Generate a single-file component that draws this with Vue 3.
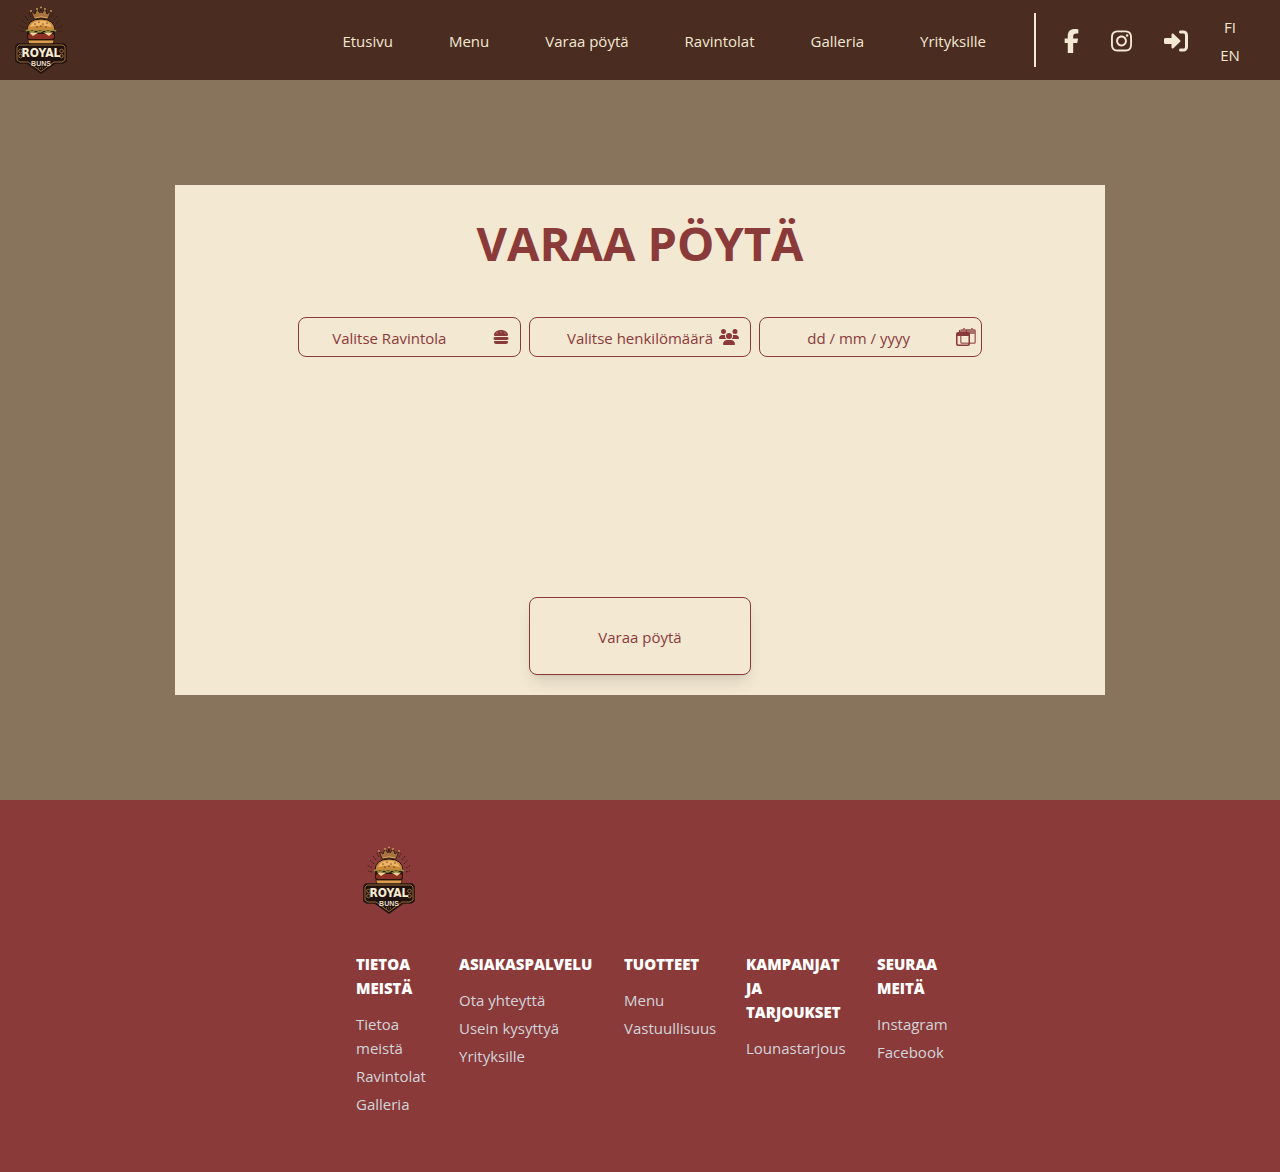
<script setup>
import { h, ref } from 'vue'

const restaurant = ref('')
const guests = ref('')
const date = ref('')

const navLinks = ['Etusivu', 'Menu', 'Varaa pöytä', 'Ravintolat', 'Galleria', 'Yrityksille']

const footerColumns = [
  { title: 'Tietoa meistä', links: ['Tietoa meistä', 'Ravintolat', 'Galleria'] },
  { title: 'Asiakaspalvelu', links: ['Ota yhteyttä', 'Usein kysyttyä', 'Yrityksille'] },
  { title: 'Tuotteet', links: ['Menu', 'Vastuullisuus'] },
  { title: 'Kampanjat ja tarjoukset', links: ['Lounastarjous'] },
  { title: 'Seuraa meitä', links: ['Instagram', 'Facebook'] }
]

const rays = [
  [24, 32, 20, 31], [24, 28, 19, 25], [26, 24, 22, 20], [28, 20, 25, 16], [31, 17, 29, 13],
  [58, 32, 62, 31], [58, 28, 63, 25], [56, 24, 60, 20], [54, 20, 57, 16], [51, 17, 53, 13]
]
const seeds = [[35, 24], [39, 22], [43, 24], [47, 23], [41, 26], [37, 27], [46, 27]]

// Burger logo, shared by the header and the footer
const BrandLogo = () =>
  h('svg', { viewBox: '0 0 80 80', width: 80, height: 80, role: 'img', 'aria-label': 'Royal Buns' }, [
    ...rays.map(([x1, y1, x2, y2]) =>
      h('line', { x1, y1, x2, y2, stroke: '#2b1a12', 'stroke-width': 0.8, 'stroke-dasharray': '2 1' })),
    h('path', { d: 'M34 19 L31 11 L35 14 L37 9 L40 13 L41 8 L42 13 L45 9 L47 14 L51 11 L48 19 Q41 16.500 34 19Z', fill: '#a87340', stroke: '#2b1a12', 'stroke-width': 0.9 }),
    h('path', { d: 'M35 18 Q41 15.500 47 18', fill: 'none', stroke: '#d9a766', 'stroke-width': 1 }),
    ...[[31, 11], [37, 9], [41, 7.5], [45, 9], [51, 11]].map(([cx, cy]) =>
      h('circle', { cx, cy, r: 1, fill: '#c99459' })),
    h('path', { d: 'M27 31 Q27 19 41 19 Q55 19 55 31Z', fill: '#c98a3c', stroke: '#20120d', 'stroke-width': 1 }),
    h('path', { d: 'M30 27 Q32 20.500 41 20.500 Q50 20.500 52 27 Q41 24 30 27Z', fill: '#edb566' }),
    ...seeds.map(([cx, cy]) => h('ellipse', { cx, cy, rx: 0.9, ry: 0.6, fill: '#552b16' })),
    h('rect', { x: 27, y: 31, width: 28, height: 9, rx: 2, fill: '#27150f' }),
    h('path', { d: 'M26 31 Q28 29 30 31 T34 31 T38 31 T42 31 T46 31 T50 31 T56 31', fill: 'none', stroke: '#9b9335', 'stroke-width': 1.4 }),
    h('rect', { x: 28, y: 34, width: 26, height: 5, rx: 2, fill: '#8c3023' }),
    h('path', { d: 'M29 32.500 H39 L36 34 L33 36Z M43 32.500 H53 L49 36 L46 34Z', fill: '#f4d693' }),
    h('path', { d: 'M28 40 H54 Q54 44.500 50 44.500 H32 Q28 44.500 28 40Z', fill: '#dc9c4d', stroke: '#27150f', 'stroke-width': 0.8 }),
    h('path', { d: 'M18 44 H64 L66 46 V61 L63 63 H55 L41 73 L27 63 H19 L16 61 V46Z', fill: '#20130f', stroke: '#20130f', 'stroke-width': 1.6 }),
    h('path', { d: 'M19 45 H63 L65 47 V60 L62 62 H54 L41 71.500 L28 62 H20 L17 60 V47Z', fill: 'none', stroke: '#a6743e', 'stroke-width': 0.9 }),
    ...[20.5, 61.5].flatMap((cx) => [
      h('circle', { cx, cy: 51, r: 1.8, fill: 'none', stroke: '#a6743e', 'stroke-width': 0.9 }),
      h('circle', { cx, cy: 56, r: 1.8, fill: 'none', stroke: '#a6743e', 'stroke-width': 0.9 })
    ]),
    h('text', { x: 41, y: 57, 'text-anchor': 'middle', 'font-family': '"Liberation Sans Narrow", "DejaVu Sans Condensed", sans-serif', 'font-size': 12, 'font-weight': 700, fill: '#f7ead2' }, 'ROYAL'),
    h('text', { x: 41, y: 66, 'text-anchor': 'middle', 'font-family': '"Liberation Sans", sans-serif', 'font-size': 7, 'font-weight': 700, fill: '#e6d8c2' }, 'BUNS'),
    h('path', { d: 'M38 68 H44', stroke: '#a98f74', 'stroke-width': 0.8, 'stroke-dasharray': '1 1' })
  ])
</script>

<template>
  <div class="page">
    <header class="header">
      <a href="#" class="brand"><BrandLogo /></a>
      <nav class="nav">
        <a v-for="label in navLinks" :key="label" href="#">{{ label }}</a>
      </nav>
      <div class="tools">
        <a href="#" aria-label="Facebook">
          <svg width="15" height="24" viewBox="0 0 320 512"><path d="M80 299.300V512H196V299.300h86.500l18-97.800H196V166.900c0-51.700 20.300-71.500 72.700-71.500c16.300 0 29.400.4 37 1.200V7.900C291.400 4 256.400 0 236.200 0C129.300 0 80 50.500 80 159.400v42.100H14v97.800H80z" /></svg>
        </a>
        <a href="#" aria-label="Instagram">
          <svg width="21" height="24" viewBox="0 0 448 512"><path d="M224.100 141c-63.600 0-114.900 51.300-114.900 114.900s51.300 114.900 114.900 114.900S339 319.500 339 255.900 287.700 141 224.100 141zm0 189.600c-41.100 0-74.700-33.500-74.700-74.700s33.500-74.700 74.700-74.700 74.700 33.500 74.700 74.700-33.600 74.700-74.700 74.700zm146.400-194.300c0 14.900-12 26.800-26.800 26.800-14.900 0-26.800-12-26.800-26.800s12-26.800 26.800-26.800 26.800 12 26.800 26.800zm76.100 27.200c-1.700-35.900-9.900-67.700-36.200-93.900-26.200-26.200-58-34.400-93.900-36.200-37-2.100-147.900-2.100-184.900 0-35.800 1.700-67.600 9.900-93.900 36.100s-34.400 58-36.200 93.900c-2.100 37-2.100 147.900 0 184.900 1.700 35.900 9.900 67.700 36.200 93.900s58 34.400 93.900 36.200c37 2.100 147.900 2.100 184.900 0 35.900-1.700 67.700-9.900 93.900-36.200 26.200-26.200 34.400-58 36.200-93.900 2.100-37 2.100-147.800 0-184.800zM398.800 388c-7.800 19.600-22.900 34.700-42.600 42.600-29.500 11.700-99.500 9-132.100 9s-102.700 2.600-132.100-9c-19.600-7.800-34.700-22.900-42.600-42.600-11.700-29.500-9-99.500-9-132.100s-2.600-102.700 9-132.100c7.800-19.600 22.900-34.700 42.600-42.600 29.500-11.700 99.500-9 132.100-9s102.700-2.600 132.100 9c19.600 7.800 34.700 22.900 42.600 42.600 11.700 29.500 9 99.500 9 132.100s2.700 102.700-9 132.100z" /></svg>
        </a>
        <a href="#" aria-label="Kirjaudu">
          <svg width="24" height="24" viewBox="0 0 512 512"><path d="M352 96h64c17.700 0 32 14.300 32 32v256c0 17.700-14.300 32-32 32h-64c-17.700 0-32 14.300-32 32s14.300 32 32 32h64c53 0 96-43 96-96V128c0-53-43-96-96-96h-64c-17.700 0-32 14.300-32 32s14.300 32 32 32zm-7.500 177c4.800-4.500 7.500-10.800 7.500-17.400s-2.700-12.800-7.500-17.300l-144-136c-7-6.600-17.200-8.400-26-4.600S160 109.900 160 119.500V192H32c-17.700 0-32 14.300-32 32v64c0 17.700 14.300 32 32 32h128v72c0 9.600 5.700 18.200 14.500 22s19 2 26-4.600z" /></svg>
        </a>
        <div class="languages">
          <button type="button">FI</button>
          <button type="button">EN</button>
        </div>
      </div>
    </header>

    <main class="main">
      <form class="card" @submit.prevent>
        <h1>VARAA PÖYTÄ</h1>
        <div class="fields">
          <div class="field restaurant">
            <select v-model="restaurant" aria-label="Ravintola">
              <option value="">Valitse Ravintola</option>
            </select>
            <svg class="icon" width="16" height="16" viewBox="0 0 512 512"><path fill-rule="evenodd" d="M61 224c-16 0-29-13-29-29C32 103 132 32 256 32s224 71 224 163c0 16-13 29-29 29H61zm67-80c9 0 16-7 16-16s-7-16-16-16-16 7-16 16 7 16 16 16zm128-32c9 0 16-7 16-16s-7-16-16-16-16 7-16 16 7 16 16 16zm128 32c9 0 16-7 16-16s-7-16-16-16-16 7-16 16 7 16 16 16zM64 256h384c64 0 64 96 0 96H64c-64 0-64-96 0-96zM48 384h416c9 0 16 7 16 16v16c0 35-29 64-64 64H96c-35 0-64-29-64-64v-16c0-9 7-16 16-16z" /></svg>
          </div>
          <div class="field guests">
            <select v-model="guests" aria-label="Henkilömäärä">
              <option value="">Valitse henkilömäärä</option>
            </select>
            <svg class="icon" width="20" height="16" viewBox="0 0 640 512"><path d="M144 0a80 80 0 1 1 0 160 80 80 0 1 1 0-160zm368 0a80 80 0 1 1 0 160 80 80 0 1 1 0-160zM0 298.700C0 239.800 47.800 192 106.700 192h42.700c15.900 0 31 3.500 44.600 9.700-1.300 7.200-1.900 14.700-1.900 22.300 0 38.200 16.800 72.500 43.300 96H21.300C9.600 320 0 310.400 0 298.700zM405.300 320h-.7c26.600-23.500 43.300-57.800 43.300-96 0-7.600-.7-15-1.900-22.300 13.600-6.300 28.700-9.700 44.600-9.700h42.700C592.200 192 640 239.800 640 298.700c0 11.800-9.600 21.300-21.300 21.300H405.300zM224 224a96 96 0 1 1 192 0 96 96 0 1 1-192 0zM128 485.300C128 411.700 187.700 352 261.300 352h117.400C452.300 352 512 411.700 512 485.300c0 14.700-11.900 26.700-26.700 26.700H154.700c-14.700 0-26.700-11.900-26.700-26.700z" /></svg>
          </div>
          <div class="field date">
            <input v-model="date" type="text" placeholder="dd / mm / yyyy" aria-label="Päivämäärä" />
            <svg class="icon" width="20" height="20" viewBox="0 0 20 20">
              <path fill-rule="evenodd" opacity=".7" d="M7 1V0h2v1h6V0h2v1h1q2 0 2 2v11q0 2-2 2H6q-2 0-2-2V3q0-2 2-2zM5.500 6v7.500q0 1 1 1h11q1 0 1-1V6z" />
              <path fill-rule="evenodd" d="M3 4V2h1v2h6V2h1v2h1q2 0 2 2v10q0 2-2 2H2q-2 0-2-2V6q0-2 2-2zM1.500 8v7.500q0 1 1 1h9q1 0 1-1V8z" />
            </svg>
          </div>
        </div>
        <button type="submit" class="submit">Varaa pöytä</button>
      </form>
    </main>

    <footer class="footer">
      <div class="footer-inner">
        <a href="#" class="brand"><BrandLogo /></a>
        <div class="columns">
          <section v-for="column in footerColumns" :key="column.title">
            <h2>{{ column.title }}</h2>
            <ul>
              <li v-for="link in column.links" :key="link"><a href="#">{{ link }}</a></li>
            </ul>
          </section>
        </div>
      </div>
    </footer>
  </div>
</template>

<style>
body {
  margin: 0;
  background: #8b3a3a;
}
</style>

<style scoped>
.page {
  font-family: "Open Sans", "Noto Sans", sans-serif;
  font-size: 15px;
  line-height: 24px;
  color: #f3e8d2;
}
.page * {
  box-sizing: border-box;
}
a {
  color: inherit;
  text-decoration: none;
}
svg {
  display: block;
  fill: currentColor;
}
button,
select,
input {
  font: inherit;
  color: inherit;
}
.header {
  display: flex;
  align-items: center;
  height: 80px;
  padding-right: 40px;
  background: #4a2c20;
}
.brand {
  display: block;
  width: 80px;
}
.nav {
  display: flex;
  gap: 56px;
  margin-left: auto;
  padding-top: 2px;
}
.tools {
  display: flex;
  align-items: center;
  gap: 32px;
  height: 54px;
  margin-left: 48px;
  padding: 2px 0 0 28px;
  border-left: 2px solid #f3e8d2;
}
.languages {
  display: flex;
  flex-direction: column;
  gap: 4px;
  width: 20px;
}
.languages button {
  display: flex;
  justify-content: center;
  padding: 0;
  border: 0;
  background: none;
  cursor: pointer;
}
.main {
  display: flex;
  align-items: center;
  justify-content: center;
  min-height: 720px;
  background: #88745c;
}
.card {
  display: flex;
  flex-direction: column;
  align-items: center;
  width: 100%;
  max-width: 930px;
  min-height: 510px;
  padding: 28px 20px 20px;
  background: #f3e8d2;
  color: #8b3a3a;
}
h1 {
  margin: 0 0 44px;
  font-size: 47px;
  line-height: 60px;
  font-weight: 700;
}
.fields {
  display: grid;
  grid-template-columns: repeat(3, 1fr);
  gap: 8px;
  width: 100%;
  max-width: 684px;
}
.field {
  position: relative;
}
.field select,
.field input {
  display: block;
  width: 100%;
  height: 40px;
  margin: 0;
  padding: 2px 40px 0 0;
  border: 1px solid #8b3a3a;
  border-radius: 8px;
  background: transparent;
  text-align: center;
  appearance: none;
}
.field input::placeholder {
  color: inherit;
  opacity: 1;
}
.field.guests select {
  padding-right: 0;
}
.field.date input {
  padding-right: 24px;
}
.icon {
  position: absolute;
  top: 12px;
  right: 12px;
  pointer-events: none;
}
.date .icon {
  top: 11px;
  right: 6px;
}
.submit {
  width: 222px;
  height: 78px;
  margin-top: auto;
  padding: 2px 0 0;
  border: 1px solid #8b3a3a;
  border-radius: 8px;
  background: #f3e8d2;
  box-shadow: 0 10px 15px -3px rgba(0, 0, 0, 0.1), 0 4px 6px -4px rgba(0, 0, 0, 0.1);
  cursor: pointer;
}
.footer {
  display: flex;
  justify-content: center;
  padding: 40px 16px 56px;
  background: #8b3a3a;
}
.footer-inner {
  padding-left: 24px;
}
.footer .brand {
  margin-left: -8px;
}
.columns {
  display: grid;
  grid-template-columns: 71px 133px 90px 99px 71px;
  gap: 32px;
  margin-top: 32px;
}
h2 {
  margin: 0 0 12px;
  font-size: 15px;
  line-height: 24px;
  font-weight: 800;
  text-transform: uppercase;
  color: #fff;
}
ul {
  display: flex;
  flex-direction: column;
  gap: 4px;
  margin: 0;
  padding: 0;
  list-style: none;
  color: #d1d5db;
}
</style>
